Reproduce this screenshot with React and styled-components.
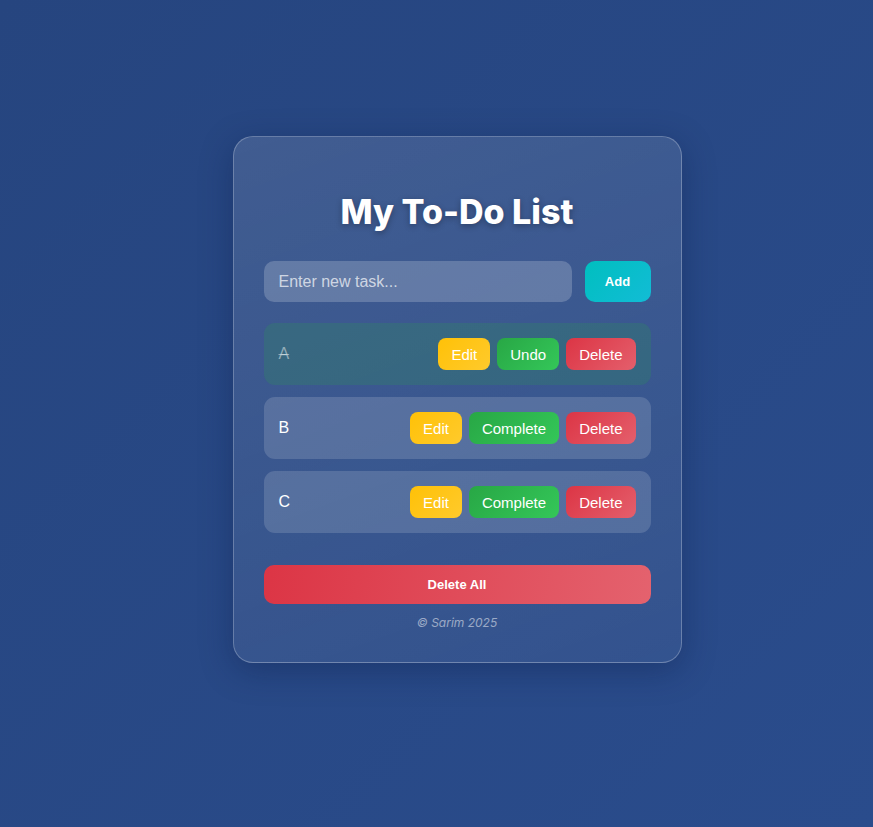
import React from "react";
import styled, { createGlobalStyle } from "styled-components";

const Global = createGlobalStyle`
  html, body { margin: 0; padding: 0; }
  body {
    min-height: 827px;
    background: linear-gradient(135deg, #26457f 0%, #2a4c8c 100%);
    font-family: "Liberation Sans", Arial, sans-serif;
  }
`;

const Page = styled.div`
  min-height: 827px;
  display: flex;
  justify-content: center;
  align-items: flex-start;
  padding: 136px 0 0 41px;
  box-sizing: border-box;
`;

const Card = styled.div`
  width: 449px;
  box-sizing: border-box;
  padding: 30px 30px 31px;
  border-radius: 20px;
  border: 1px solid rgba(255, 255, 255, 0.25);
  background: linear-gradient(160deg, rgba(255,255,255,0.12), rgba(255,255,255,0.05));
  box-shadow: 0 8px 32px rgba(10, 25, 70, 0.35);
  display: flex;
  flex-direction: column;
`;

const Title = styled.h1`
  margin: 21px 0 25px;
  text-align: center;
  font-family: Inter, "Noto Sans", sans-serif;
  font-weight: 800;
  font-size: 34px;
  line-height: 48px;
  color: #fff;
  text-shadow: 0 2px 6px rgba(0, 0, 0, 0.3);
`;

const InputRow = styled.div`
  display: flex;
  gap: 13px;
  margin-bottom: 21px;
`;

const Input = styled.input`
  flex: 1;
  height: 41px;
  box-sizing: border-box;
  border: none;
  border-radius: 10px;
  padding: 0 15px;
  background: rgba(255, 255, 255, 0.2);
  color: #fff;
  font-family: "Liberation Sans", Arial, sans-serif;
  font-size: 16px;
  outline: none;
  &::placeholder { color: rgba(255, 255, 255, 0.7); }
`;

const AddButton = styled.button`
  width: 66px;
  height: 41px;
  border: none;
  border-radius: 10px;
  background: linear-gradient(135deg, #00bfbf, #12bcd6);
  color: #fff;
  font-family: "Liberation Sans", Arial, sans-serif;
  font-weight: 700;
  font-size: 13px;
`;

const List = styled.ul`
  list-style: none;
  margin: 0;
  padding: 0;
  display: flex;
  flex-direction: column;
  gap: 12px;
`;

const Item = styled.li`
  height: 62px;
  box-sizing: border-box;
  padding: 0 15px;
  border-radius: 11px;
  display: flex;
  align-items: center;
  justify-content: space-between;
  background: ${(p) => (p.$done ? "rgba(40, 167, 69, 0.2)" : "rgba(255, 255, 255, 0.15)")};
`;

const Text = styled.span`
  font-size: 16px;
  color: ${(p) => (p.$done ? "rgba(255,255,255,0.45)" : "#fff")};
  text-decoration: ${(p) => (p.$done ? "line-through" : "none")};
`;

const Actions = styled.div`
  display: flex;
  gap: 7px;
`;

const gradients = {
  edit: "linear-gradient(135deg, #ffc107, #ffca2c)",
  done: "linear-gradient(135deg, #28a745, #34c759)",
  del: "linear-gradient(135deg, #dc3545, #e45f6c)",
};

const ActionButton = styled.button`
  height: 32px;
  padding: 0 13px;
  border: none;
  border-radius: 8px;
  background: ${(p) => gradients[p.$kind]};
  color: #fff;
  font-family: "Liberation Sans", Arial, sans-serif;
  font-size: 15px;
`;

const DeleteAll = styled.button`
  margin-top: 32px;
  height: 39px;
  border: none;
  border-radius: 10px;
  background: linear-gradient(100deg, #dc3545, #e4626e);
  color: #fff;
  font-family: "Liberation Sans", Arial, sans-serif;
  font-weight: 700;
  font-size: 13px;
`;

const Footer = styled.p`
  margin: 11px 0 0;
  text-align: center;
  font-family: Inter, "Noto Sans", sans-serif;
  font-style: italic;
  font-size: 12px;
  line-height: 16px;
  color: rgba(255, 255, 255, 0.5);
`;

const tasks = [
  { text: "A", done: true },
  { text: "B", done: false },
  { text: "C", done: false },
];

export default function App() {
  return (
    <>
      <Global />
      <Page>
        <Card>
          <Title>My To-Do List</Title>
          <InputRow>
            <Input placeholder="Enter new task..." />
            <AddButton>Add</AddButton>
          </InputRow>
          <List>
            {tasks.map((t) => (
              <Item key={t.text} $done={t.done}>
                <Text $done={t.done}>{t.text}</Text>
                <Actions>
                  <ActionButton $kind="edit">Edit</ActionButton>
                  <ActionButton $kind="done">{t.done ? "Undo" : "Complete"}</ActionButton>
                  <ActionButton $kind="del">Delete</ActionButton>
                </Actions>
              </Item>
            ))}
          </List>
          <DeleteAll>Delete All</DeleteAll>
          <Footer>© Sarim 2025</Footer>
        </Card>
      </Page>
    </>
  );
}
